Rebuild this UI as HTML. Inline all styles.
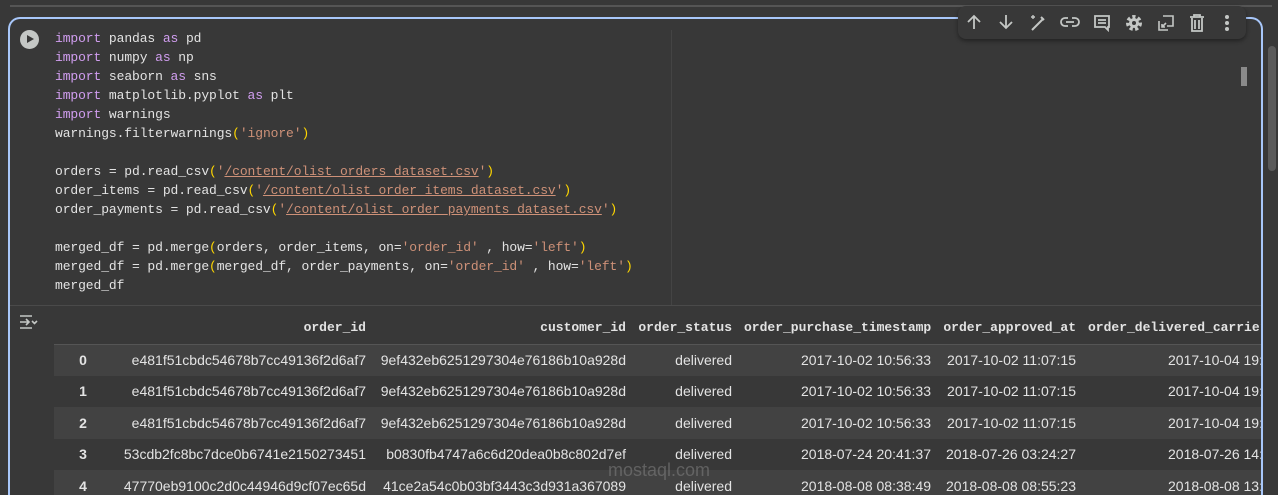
<!DOCTYPE html>
<html style="overflow:hidden;width:1278px;height:495px"><head><meta charset="utf-8"><style>
*{margin:0;padding:0;box-sizing:border-box}
body{width:1278px;height:495px;background:#383838;overflow:hidden;position:relative;font-family:"Liberation Sans",sans-serif;color:#e3e3e3}
.topline{position:absolute;left:10px;top:5px;width:1262px;height:2px;background:#555}
.cell{position:absolute;left:8px;top:17px;width:1255px;height:478px;border:2px solid #a8c7fa;border-bottom:none;border-radius:12px 12px 0 0;background:#383838}
.run{position:absolute;left:20px;top:30px;width:19px;height:19px;border-radius:50%;background:#c4c7c5}
.run:after{content:"";position:absolute;left:7px;top:5px;border-left:7px solid #383838;border-top:4.5px solid transparent;border-bottom:4.5px solid transparent}
.code{position:absolute;left:55px;top:29px;font:13px/19px "Liberation Mono",monospace;letter-spacing:-0.1px;color:#e3e3e3;white-space:pre}
.k{color:#d19ef0}.s{color:#ce9178}.u{text-decoration:underline;text-decoration-color:#ce9178}.p{color:#ffd700}
.ruler{position:absolute;left:671px;top:30px;width:1px;height:275px;background:#444}
.sep{position:absolute;left:10px;top:305px;width:1251px;height:1px;background:#4a4a4a}
.toolbar{position:absolute;left:958px;top:6px;width:288px;height:33px;background:#383838;border-radius:8px;box-shadow:0 2px 4px rgba(0,0,0,.4)}
.toolbar svg{position:absolute;top:8px}
.sb{position:absolute;left:1268px;top:46px;width:8px;height:125px;background:#5a5a5a;border-radius:4px}
.mini{position:absolute;left:1241px;top:67px;width:6px;height:19px;background:#8a8a8a}
.tw{position:absolute;left:54px;top:311px;width:1207px;height:184px;overflow:hidden}
table{border-collapse:collapse;font-size:14px;table-layout:fixed;width:1250px}
th{font:bold 13px "Liberation Mono",monospace;text-align:right;height:33px;padding:0 6px;border-bottom:1px solid #555;white-space:nowrap;overflow:hidden}
td{text-align:right;height:31.5px;padding:0 6px;white-space:nowrap;overflow:hidden}
tr.a td{background:#424242}
td.i{font-weight:bold;text-align:center}
.wm{position:absolute;left:608px;top:460px;color:rgba(130,130,130,.55);font-size:18px}
</style></head><body>
<div class="topline"></div>
<div class="cell"></div>
<div class="run"></div>
<div class="code"><span class="k">import</span> pandas <span class="k">as</span> pd
<span class="k">import</span> numpy <span class="k">as</span> np
<span class="k">import</span> seaborn <span class="k">as</span> sns
<span class="k">import</span> matplotlib.pyplot <span class="k">as</span> plt
<span class="k">import</span> warnings
warnings.filterwarnings<span class="p">(</span><span class="s">'ignore'</span><span class="p">)</span>

orders = pd.read_csv<span class="p">(</span><span class="s">'<span class="u">/content/olist_orders_dataset.csv</span>'</span><span class="p">)</span>
order_items = pd.read_csv<span class="p">(</span><span class="s">'<span class="u">/content/olist_order_items_dataset.csv</span>'</span><span class="p">)</span>
order_payments = pd.read_csv<span class="p">(</span><span class="s">'<span class="u">/content/olist_order_payments_dataset.csv</span>'</span><span class="p">)</span>

merged_df = pd.merge<span class="p">(</span>orders, order_items, on=<span class="s">'order_id'</span> , how=<span class="s">'left'</span><span class="p">)</span>
merged_df = pd.merge<span class="p">(</span>merged_df, order_payments, on=<span class="s">'order_id'</span> , how=<span class="s">'left'</span><span class="p">)</span>
merged_df</div>
<div class="ruler"></div>
<div class="sep"></div>
<svg style="position:absolute;left:18px;top:314px" width="20" height="16" viewBox="0 0 20 16" fill="none" stroke="#c4c7c5" stroke-width="1.6"><path d="M2 2h12M2 8h9M2 14h12M8 5l3 3-3 3M14 7l2.5 2.5L19 7"/></svg>
<div class="toolbar">
<svg style="left:8px" width="16" height="16" viewBox="0 0 16 16" fill="none" stroke="#c4c7c5" stroke-width="1.8"><path d="M8 15V2M2 8l6-6 6 6"/></svg>
<svg style="left:40px" width="16" height="16" viewBox="0 0 16 16" fill="none" stroke="#c4c7c5" stroke-width="1.8"><path d="M8 1v13M2 8l6 6 6-6"/></svg>
<svg style="left:71px" width="18" height="18" viewBox="0 0 18 18" fill="none" stroke="#c4c7c5" stroke-width="2"><path d="M3 16L14 5M12 3l3 3"/><path d="M4 1v4M2 3h4" stroke-width="1.4"/></svg>
<svg style="left:102px" width="20" height="16" viewBox="0 0 20 16" fill="none" stroke="#c4c7c5" stroke-width="1.8"><path d="M8 4H5a4 4 0 000 8h3M12 4h3a4 4 0 010 8h-3M6 8h8"/></svg>
<svg style="left:135px" width="18" height="18" viewBox="0 0 18 18" fill="none" stroke="#c4c7c5" stroke-width="1.8"><path d="M2 2h14v11h-1v3l-3-3H2z M5 6h8M5 9h8"/></svg>
<svg style="left:167px" width="18" height="18" viewBox="0 0 18 18"><circle cx="9" cy="9" r="6" fill="none" stroke="#c4c7c5" stroke-width="4" stroke-dasharray="3 2.3"/><circle cx="9" cy="9" r="5" fill="#c4c7c5"/><circle cx="9" cy="9" r="2" fill="#383838"/></svg>
<svg style="left:199px" width="18" height="18" viewBox="0 0 18 18" fill="none" stroke="#c4c7c5" stroke-width="1.6"><path d="M6 2h10v10h-6M2 7v9h9M5 13l4-4M5 10v3h3"/></svg>
<svg style="left:231px" width="16" height="18" viewBox="0 0 16 18" fill="none" stroke="#c4c7c5" stroke-width="1.8"><path d="M1 3h14M5 3V1h6v2M3 4v13h10V4M6 6v9M10 6v9"/></svg>
<svg style="left:266px" width="6" height="18" viewBox="0 0 6 18" fill="#c4c7c5"><circle cx="3" cy="3" r="2"/><circle cx="3" cy="9" r="2"/><circle cx="3" cy="15" r="2"/></svg>
</div>
<div class="mini"></div>
<div class="tw"><table>
<colgroup><col style="width:58px"><col style="width:260px"><col style="width:260px"><col style="width:106px"><col style="width:199px"><col style="width:145px"><col style="width:222px"></colgroup>
<tr><th></th><th>order_id</th><th>customer_id</th><th>order_status</th><th>order_purchase_timestamp</th><th>order_approved_at</th><th>order_delivered_carrier_date</th></tr>
<tr class="a"><td class="i">0</td><td>e481f51cbdc54678b7cc49136f2d6af7</td><td>9ef432eb6251297304e76186b10a928d</td><td>delivered</td><td>2017-10-02 10:56:33</td><td>2017-10-02 11:07:15</td><td>2017-10-04 19:55:00</td></tr>
<tr><td class="i">1</td><td>e481f51cbdc54678b7cc49136f2d6af7</td><td>9ef432eb6251297304e76186b10a928d</td><td>delivered</td><td>2017-10-02 10:56:33</td><td>2017-10-02 11:07:15</td><td>2017-10-04 19:55:00</td></tr>
<tr class="a"><td class="i">2</td><td>e481f51cbdc54678b7cc49136f2d6af7</td><td>9ef432eb6251297304e76186b10a928d</td><td>delivered</td><td>2017-10-02 10:56:33</td><td>2017-10-02 11:07:15</td><td>2017-10-04 19:55:00</td></tr>
<tr><td class="i">3</td><td>53cdb2fc8bc7dce0b6741e2150273451</td><td>b0830fb4747a6c6d20dea0b8c802d7ef</td><td>delivered</td><td>2018-07-24 20:41:37</td><td>2018-07-26 03:24:27</td><td>2018-07-26 14:31:00</td></tr>
<tr class="a"><td class="i">4</td><td>47770eb9100c2d0c44946d9cf07ec65d</td><td>41ce2a54c0b03bf3443c3d931a367089</td><td>delivered</td><td>2018-08-08 08:38:49</td><td>2018-08-08 08:55:23</td><td>2018-08-08 13:50:00</td></tr>
</table></div>
<div class="sb"></div>
<div class="wm">mostaql.com</div>
</body></html>
